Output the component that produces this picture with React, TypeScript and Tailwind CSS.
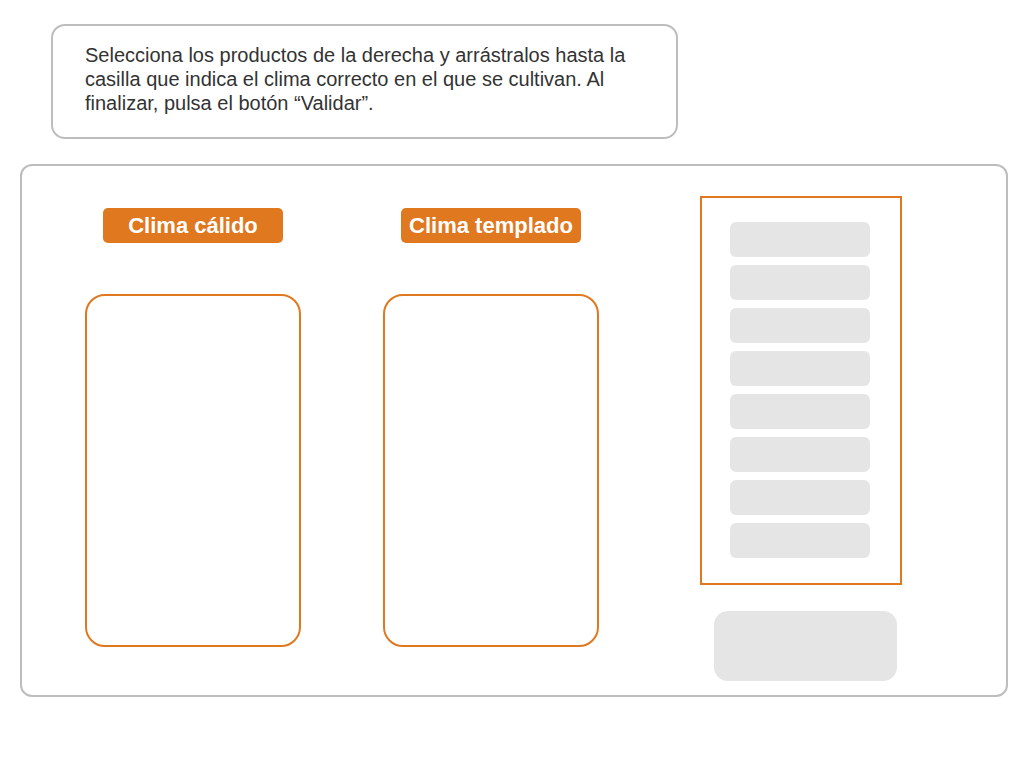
export default function App() {
  const items = [0, 1, 2, 3, 4, 5, 6, 7];
  return (
    <div className="w-[1024px] h-[768px] bg-white" style={{ fontFamily: '"Liberation Sans", Arial, sans-serif' }}>
      <div className="pt-[24px]">
        <div className="ml-[51px] w-[627px] h-[115px] border-2 border-[#bdbdbd] rounded-[14px] pl-[32px] pr-[31px] pt-[17px] text-[20px] leading-[24px] text-[#333333]">
          Selecciona los productos de la derecha y arrástralos hasta la casilla que indica el clima correcto en el que se cultivan. Al finalizar, pulsa el botón “Validar”.
        </div>
      </div>
      <div className="ml-[20px] mt-[25px] w-[988px] h-[533px] border-2 border-[#bdbdbd] rounded-[12px] flex items-start pl-[63px]">
        <div className="w-[216px] flex flex-col items-center pt-[42px]">
          <div className="w-[180px] h-[35px] bg-[#e07820] rounded-[5px] flex items-center justify-center text-white font-bold text-[22px]">
            Clima cálido
          </div>
          <div className="mt-[51px] w-[216px] h-[353px] border-2 border-[#e07820] rounded-[20px]" />
        </div>
        <div className="ml-[82px] w-[216px] flex flex-col items-center pt-[42px]">
          <div className="w-[180px] h-[35px] bg-[#e07820] rounded-[5px] flex items-center justify-center text-white font-bold text-[22px]">
            Clima templado
          </div>
          <div className="mt-[51px] w-[216px] h-[353px] border-2 border-[#e07820] rounded-[20px]" />
        </div>
        <div className="ml-[101px] pt-[30px] flex flex-col">
          <div className="w-[202px] h-[389px] border-2 border-[#e07820] pt-[24px] pl-[28px] flex flex-col gap-[8px]">
            {items.map((i) => (
              <div key={i} className="w-[140px] h-[35px] bg-[#e5e5e5] rounded-[6px]" />
            ))}
          </div>
          <div className="mt-[26px] ml-[14px] w-[183px] h-[70px] bg-[#e5e5e5] rounded-[14px]" />
        </div>
      </div>
    </div>
  );
}
